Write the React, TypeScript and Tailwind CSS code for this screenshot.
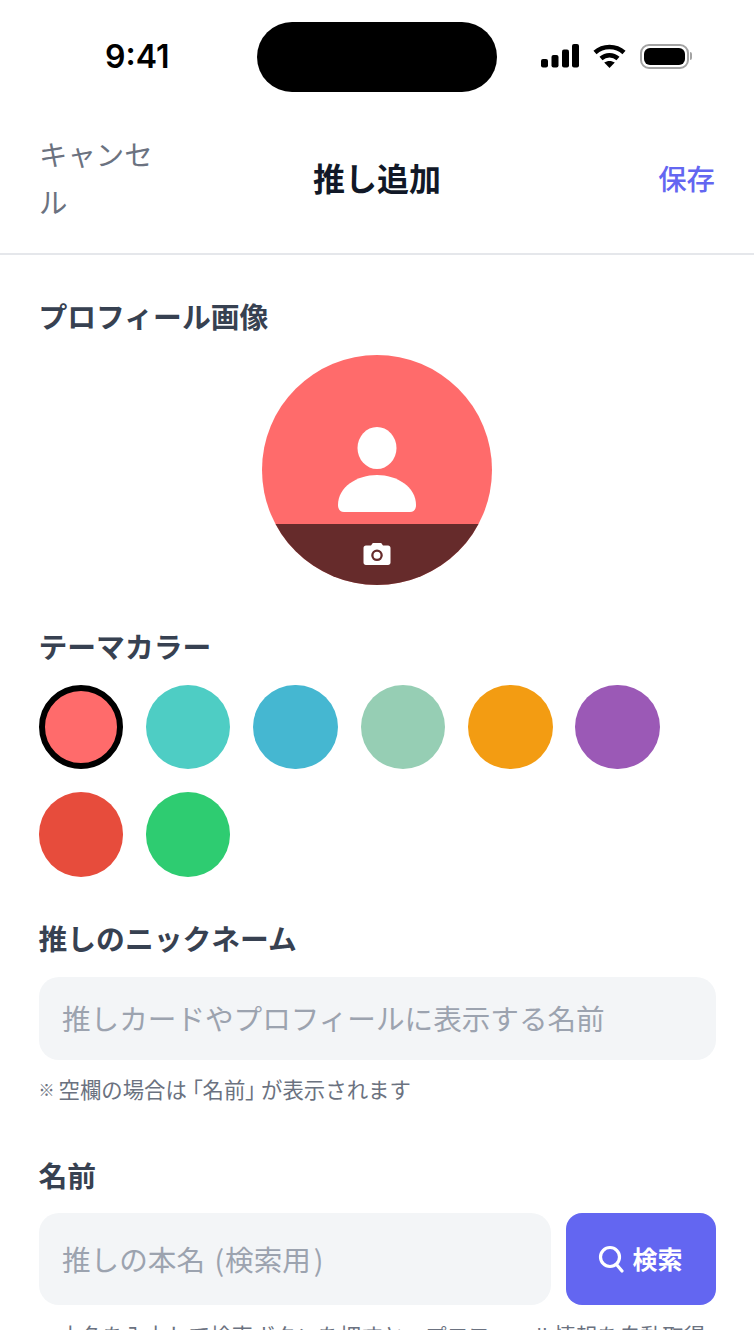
import React from "react";

const colors = ["bg-[#ff6b6b]", "bg-[#4ecdc4]", "bg-[#45b7d1]", "bg-[#96ceb4]", "bg-[#f39c12]", "bg-[#9b59b6]", "bg-[#e74c3c]", "bg-[#2ecc71]"];

function StatusIcons() {
  return (
    <div className="flex items-center gap-[14px] ml-[44px]">
      <svg width="38" height="24" viewBox="0 0 38 24" fill="#000">
        <rect x="0" y="15" width="7" height="8.5" rx="2" />
        <rect x="10.5" y="11" width="7" height="12.5" rx="2" />
        <rect x="21" y="5.5" width="7" height="18" rx="2" />
        <rect x="31" y="0" width="7" height="23.5" rx="2" />
      </svg>
      <svg width="33" height="24" viewBox="0 0 33 24" fill="none" stroke="#000" strokeWidth="4.5">
        <path d="M2 8.5C10 1 23 1 31 8.5" />
        <path d="M8 14.5C12.8 10.2 20.2 10.2 25 14.5" />
        <path d="M16.5 24L11.2 18.6C14.4 16.4 18.6 16.4 21.8 18.6Z" fill="#000" stroke="none" />
      </svg>
      <div className="flex items-center">
        <div className="w-[49px] h-[25px] rounded-[9px] border-2 border-[#a3a3a3] p-[2px]">
          <div className="w-full h-full rounded-[6px] bg-black" />
        </div>
        <div className="w-[2px] h-[8px] ml-[1px] rounded-r-full bg-[#a3a3a3]" />
      </div>
    </div>
  );
}

function Label({ children, className = "" }: { children: React.ReactNode; className?: string }) {
  return <div className={`text-[28.8px] leading-[40px] font-bold text-[#374151] ${className}`}>{children}</div>;
}

export default function App() {
  return (
    <div className="w-[754px] h-[1330px] overflow-hidden bg-white font-['Noto_Sans_CJK_JP','Liberation_Sans',sans-serif]">
      <div className="h-[110px] flex items-start pl-[105px] pt-[22px]">
        <div className="text-[32px] leading-[70px] font-semibold text-black w-[152px] font-['Inter',sans-serif]">9:41</div>
        <div className="w-[240px] h-[70px] rounded-full bg-black" />
        <div className="h-[68px] flex items-center">
          <StatusIcons />
        </div>
      </div>

      <div className="h-[145px] pb-[7px] border-b-2 border-[#e5e7eb] flex items-center justify-between pl-[39px] pr-[39px]">
        <div className="w-[115px] text-[28.4px] leading-[48px] text-[#6b7280]">キャンセル</div>
        <div className="text-[32px] font-bold text-[#111827] leading-[46px] mb-[2px]">推し追加</div>
        <div className="w-[115px] text-right text-[28.4px] font-medium text-[#6366f1] leading-[40px]">保存</div>
      </div>

      <div className="pl-[38.5px] pr-[38.5px] pt-[41px]">
        <Label>プロフィール画像</Label>
        <div className="flex justify-center mt-[19px]">
          <div className="relative w-[230px] h-[230px] rounded-full bg-[#ff6b6b] overflow-hidden flex justify-center">
            <svg className="mt-[72px]" width="80" height="86" viewBox="0 0 80 86" fill="#fff">
              <ellipse cx="40" cy="21" rx="19.5" ry="21" />
              <path d="M1 78C1 60 20 48 40 48C60 48 79 60 79 78C79 82 77 85 73 85H7C3 85 1 82 1 78Z" />
            </svg>
            <div className="absolute left-0 right-0 bottom-0 h-[61px] bg-black/60 flex items-center justify-center">
              <svg className="mt-[-2px]" width="28" height="24" viewBox="0 0 28 24">
                <path fillRule="evenodd" fill="#fff" d="M3 3.5H8L9.8 1H18.2L20 3.5H25C26.5 3.5 27.5 4.5 27.5 6V20.5C27.5 22 26.5 23 25 23H3C1.5 23 .5 22 .5 20.5V6C.5 4.5 1.5 3.5 3 3.5ZM14 7.5A5.8 5.8 0 1 0 14 19.1A5.8 5.8 0 1 0 14 7.5ZM14 9.8A3.5 3.5 0 1 1 14 16.8A3.5 3.5 0 1 1 14 9.8Z" />
              </svg>
            </div>
          </div>
        </div>

        <Label className="mt-[41px]">テーマカラー</Label>
        <div className="flex flex-wrap gap-x-[22.9px] gap-y-[23px] w-[660px] mt-[18.6px]">
          {colors.map((c, i) => (
            <div key={c} className={`w-[84.5px] h-[84.5px] rounded-full ${c} ${i === 0 ? "border-[6px] border-black" : ""}`} />
          ))}
        </div>

        <Label className="mt-[41.4px]">推しのニックネーム</Label>
        <div className="mt-[19px] h-[83px] rounded-[20px] bg-[#f3f5f7] flex items-center px-[23.5px] text-[28.6px] text-[#9ca3af]">
          推しカードやプロフィールに表示する名前
        </div>
        <div className="mt-[14px] text-[21.4px] leading-[30px] text-[#6b7280] flex items-center whitespace-nowrap">
          <span className="text-[16px] font-medium w-[20px]">※</span>
          <span>
            空欄の場合は<span className="ml-[5px] [font-feature-settings:'palt']">「</span>名前<span className="mr-[5px] [font-feature-settings:'palt']">」</span>が表示されます
          </span>
        </div>

        <Label className="mt-[51px]">名前</Label>
        <div className="mt-[18px] flex gap-[15px]">
          <div className="flex-1 h-[92px] rounded-[20px] bg-[#f3f5f7] flex items-center px-[23.5px] text-[28.6px] text-[#9ca3af] whitespace-pre">
            <span>推しの本名 </span>
            <span className="ml-[3px] mr-[1px]">(</span>
            <span>検索用</span>
            <span className="ml-[3px]">)</span>
          </div>
          <div className="w-[150px] h-[92px] rounded-[16px] bg-[#6366f1] flex items-center justify-center gap-[8px] text-white text-[25px] font-bold">
            <svg width="26" height="28" viewBox="0 0 26 28" fill="none" stroke="#fff" strokeWidth="3.2" strokeLinecap="round">
              <circle cx="12" cy="12" r="9.5" />
              <path d="M18.5 19.5L24 26" />
            </svg>
            検索
          </div>
        </div>
        <div className="mt-[15px] text-[21.6px] leading-[30px] text-[#6b7280] pl-[21px] whitespace-nowrap">本名を入力して検索ボタンを押すと、プロフィール情報を自動取得</div>
      </div>
    </div>
  );
}
